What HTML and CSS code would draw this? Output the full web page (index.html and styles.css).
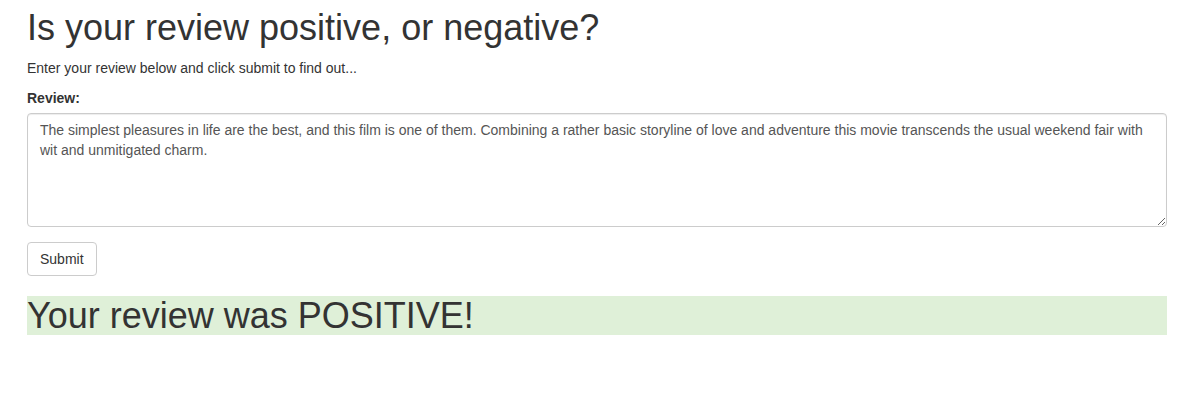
FILE: index.html
```html
<!DOCTYPE html>
<html>
<head>
<meta charset="utf-8">
<link rel="stylesheet" href="styles.css">
</head>
<body>
<div class="container">
  <h1 class="title">Is your review positive, or negative?</h1>
  <p class="lead-text">Enter your review below and click submit to find out...</p>
  <form class="review-form">
    <div class="form-group">
      <label class="form-label" for="review">Review:</label>
      <textarea id="review" class="form-control" rows="5" spellcheck="false">The simplest pleasures in life are the best, and this film is one of them. Combining a rather basic storyline of love and adventure this movie transcends the usual weekend fair with wit and unmitigated charm.</textarea>
    </div>
    <button type="button" class="btn">Submit</button>
  </form>
  <h1 class="result">Your review was POSITIVE!</h1>
</div>
</body>
</html>
```
FILE: styles.css
```css
* { box-sizing: border-box; }
html, body { margin: 0; padding: 0; background: #fff; }
body {
  font-family: "Liberation Sans", Arial, Helvetica, sans-serif;
  font-size: 14px;
  line-height: 20px;
  color: #333;
}
.container {
  width: 1140px;
  margin-left: 27px;
}
.title, .result {
  font-size: 36px;
  font-weight: 400;
  line-height: 1.1;
  margin: 8px 0 10px;
  color: #333;
}
.result {
  margin-top: 20px;
  background: #dff0d8;
}
.lead-text { margin: 0 0 10px; }
.form-group { margin-bottom: 15px; }
.form-label {
  display: block;
  font-weight: 700;
  margin-bottom: 5px;
}
.form-control {
  display: block;
  width: 100%;
  height: 114px;
  padding: 6px 12px;
  font-family: inherit;
  font-size: 14px;
  line-height: 20px;
  color: #555;
  background: #fff;
  border: 1px solid #ccc;
  border-radius: 4px;
  box-shadow: inset 0 1px 1px rgba(0,0,0,.075);
  resize: vertical;
  margin: 0;
}
.btn {
  display: inline-block;
  padding: 6px 12px;
  font-family: inherit;
  font-size: 14px;
  line-height: 20px;
  color: #333;
  background: #fff;
  border: 1px solid #ccc;
  border-radius: 4px;
  margin: 0;
}
```
